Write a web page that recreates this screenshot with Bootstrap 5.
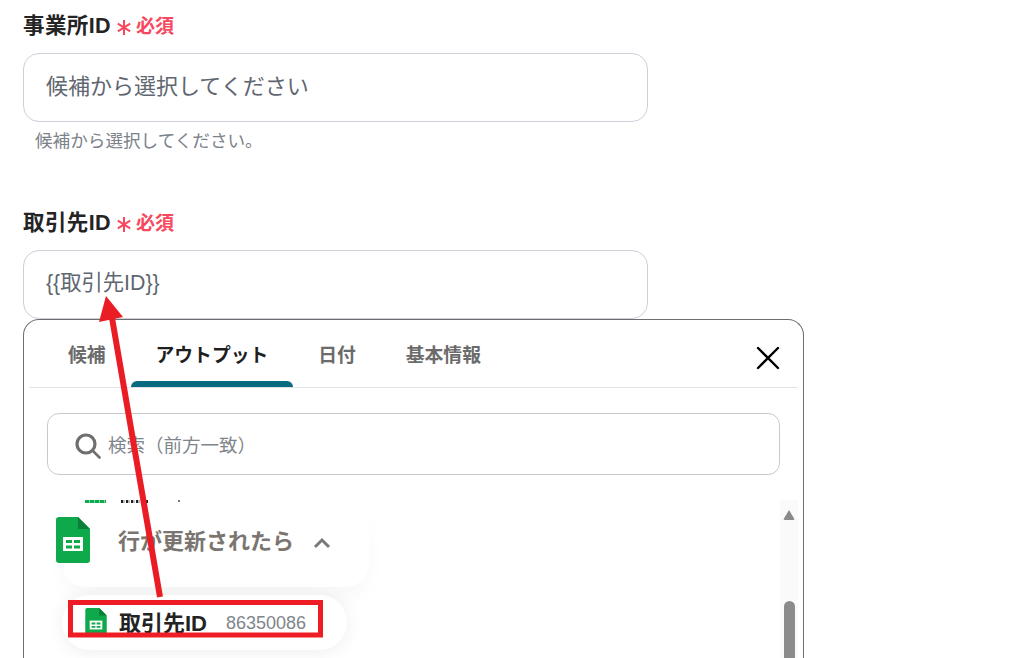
<!DOCTYPE html>
<html lang="ja"><head><meta charset="utf-8">
<link href="https://cdn.jsdelivr.net/npm/bootstrap@5.3.0/dist/css/bootstrap.min.css" rel="stylesheet">
<style>
html,body{height:658px;overflow:hidden;background:#fff}
body{font-family:"Liberation Sans","Noto Sans CJK JP",sans-serif;position:relative;width:1017px}
.page-wrap{padding:14px 0 0 23px}
.fld-label{font-size:21.500px;line-height:25px;font-weight:700;color:#242424;letter-spacing:.4px;height:25px;white-space:nowrap}
.req-star{margin-left:6px;vertical-align:-2px}
.req-text{color:#f7485f;font-size:19px;font-weight:700;margin-left:5px;letter-spacing:0}
.fld-box{width:625px;height:69px;border:1px solid #ccd0d8;border-radius:16px;padding:0 22px;font-size:22px;color:#5f6670;line-height:66px;margin-top:14px;background:#fff}
.fld-val{font-size:21.300px;line-height:64px}
.fld-help{font-size:17.600px;line-height:22px;color:#7b828a;margin:8px 0 0 12px}
.block-one{height:197px}
.pop{width:781px;height:339px;border:1px solid #6e6e6e;border-bottom:0;border-radius:16px 16px 0 0;background:#fff;position:relative;overflow:hidden}
.tabbar{height:68px;margin:0 5px;border-bottom:1px solid #e3e3e3;padding-left:14px}
.tabitem{font-size:18.800px;font-weight:700;color:#6b6b6b;line-height:72px;height:67px;position:relative;padding:0 25px;white-space:nowrap}
.tabitem.on{color:#1f1f1f}
.tabitem.on::after{content:"";position:absolute;left:0;right:0;bottom:0;height:6px;background:#0a6a82;border-radius:6px 6px 0 0}
.pop-close{position:absolute;right:23px;top:26px;width:24px;height:24px}
.pop-search{margin:25px 23px 0;height:62px;border:1px solid #c9c9c9;border-radius:12px;font-size:18.500px;color:#80858b;padding:3px 0 0 27px;gap:7px}
.sbar{position:absolute;right:5px;top:180px;width:18px;bottom:0;background:#fafafa}
.sbar-up{position:absolute;left:3px;top:10px;width:12px;height:10px;background:#8a8a8a;clip-path:polygon(50% 0,100% 100%,0 100%);border-radius:2px}
.sbar-th{position:absolute;left:4px;top:101px;width:11px;bottom:0;background:#8b8b8b;border-radius:6px 6px 0 0}
.peek-row{position:absolute;left:61px;top:180px;height:3px;width:180px}
.peek-g{width:21px;height:3px;background:repeating-linear-gradient(90deg,#0da94b 0 4px,#7fd3a0 4px 5px);flex:none}
.peek-k{width:27px;height:3px;margin-left:15px;background:repeating-linear-gradient(90deg,#222 0 2px,#bbb 2px 4px,#fff 4px 5px);flex:none}
.peek-d{width:2px;height:2px;margin-left:30px;background:#777;flex:none}
.group-head{position:absolute;left:38px;top:183px;width:307px;height:84px;background:#fff;border-radius:0 0 24px 24px;box-shadow:0 16px 26px -6px rgba(0,0,0,.04)}
.group-icon{margin-left:-6px;margin-top:-10px}
.group-title{font-size:22px;font-weight:700;color:#7a7570;margin-left:28px;margin-top:-7px}
.group-chev{margin-left:18px;margin-top:-4px}
.out-pill{position:absolute;left:38px;top:275px;width:285px;height:55px;background:#fff;border-radius:28px;box-shadow:0 2px 18px rgba(0,0,0,.07);padding-left:23px}
.out-name{font-size:22px;font-weight:700;color:#232323;margin:2px 0 0 12px}
.out-val{font-size:18px;color:#80858b;margin:2px 0 0 19px}
.overlay-svg{position:absolute;left:0;top:0;width:1017px;height:658px;pointer-events:none}
</style></head>
<body>
<div class="page-wrap">
 <div class="block-one">
  <div class="fld-label">事業所ID<svg class="req-star" width="14" height="15" viewBox="0 0 14 15" fill="none" stroke="#f7485f" stroke-width="2"><path d="M7 0V15M.8 3.600L13.200 11.400M13.200 3.600L.8 11.400"/></svg><span class="req-text">必須</span></div>
  <div class="fld-box">候補から選択してください</div>
  <div class="fld-help">候補から選択してください。</div>
 </div>
 <div class="fld-label">取引先ID<svg class="req-star" width="14" height="15" viewBox="0 0 14 15" fill="none" stroke="#f7485f" stroke-width="2"><path d="M7 0V15M.8 3.600L13.200 11.400M13.200 3.600L.8 11.400"/></svg><span class="req-text">必須</span></div>
 <div class="fld-box fld-val">{{取引先ID}}</div>
 <div class="pop">
  <div class="tabbar d-flex">
   <div class="tabitem">候補</div>
   <div class="tabitem on">アウトプット</div>
   <div class="tabitem">日付</div>
   <div class="tabitem">基本情報</div>
  </div>
  <svg class="pop-close" viewBox="0 0 24 24" fill="none" stroke="#000" stroke-width="2.400" stroke-linecap="round"><path d="M2 2L22 22M22 2L2 22"/></svg>
  <div class="pop-search d-flex align-items-center">
   <svg width="26" height="26" viewBox="0 0 26 26" fill="none" stroke="#6f6f6f" stroke-linecap="round"><circle cx="11" cy="11" r="9" stroke-width="3.200"/><path d="M18 18L24.500 24.500" stroke-width="2.600"/></svg>
   <span>検索（前方一致）</span>
  </div>
  <div class="sbar"><div class="sbar-up"></div><div class="sbar-th"></div></div>
  <div class="peek-row d-flex"><div class="peek-g"></div><div class="peek-k"></div><div class="peek-d"></div></div>
  <div class="group-head d-flex align-items-center">
   <svg class="group-icon" width="34" height="46" viewBox="0 0 34 46"><path d="M3 0H22L34 12V43a3 3 0 0 1-3 3H3a3 3 0 0 1-3-3V3a3 3 0 0 1 3-3z" fill="#0da94b"/><path d="M22 0L34 12H22z" fill="#0a7f38"/><path d="M7 20H27V34H7z" fill="#fff"/><path d="M10 23H16V26H10zM18 23H24V26H18zM10 28.500H16V31.500H10zM18 28.500H24V31.500H18z" fill="#0da94b"/></svg>
   <span class="group-title">行が更新されたら</span>
   <svg class="group-chev" width="20" height="14" viewBox="0 0 20 14" fill="none" stroke="#7a7a7a" stroke-width="3"><path d="M3 11L10 4L17 11"/></svg>
  </div>
  <div class="out-pill d-flex align-items-center">
   <svg width="22" height="29" viewBox="0 0 34 46"><path d="M3 0H22L34 12V43a3 3 0 0 1-3 3H3a3 3 0 0 1-3-3V3a3 3 0 0 1 3-3z" fill="#0da94b"/><path d="M22 0L34 12H22z" fill="#0a7f38"/><path d="M7 20H27V34H7z" fill="#fff"/><path d="M10 23H16V26H10zM18 23H24V26H18zM10 28.500H16V31.500H10zM18 28.500H24V31.500H18z" fill="#0da94b"/></svg>
   <span class="out-name">取引先ID</span><span class="out-val">86350086</span>
  </div>
 </div>
</div>
<svg class="overlay-svg" viewBox="0 0 1017 658" fill="none">
 <path d="M160 597L111 312" stroke="#ea1c24" stroke-width="6"/>
 <path d="M106 296L123 317L99 322z" fill="#ea1c24"/>
 <rect x="70.500" y="602.500" width="250" height="32.500" stroke="#ee1c25" stroke-width="5"/>
</svg>
</body></html>
